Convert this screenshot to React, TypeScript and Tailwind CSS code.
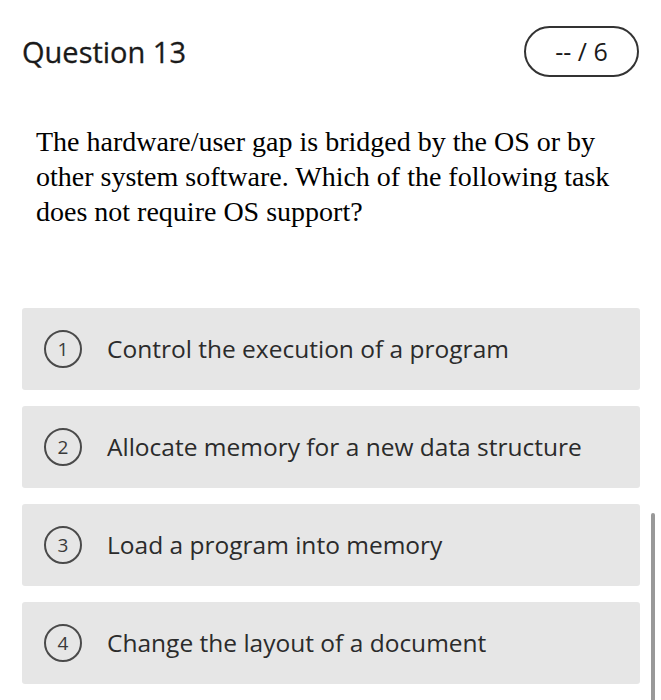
import React from 'react'

const options = [
  'Control the execution of a program',
  'Allocate memory for a new data structure',
  'Load a program into memory',
  'Change the layout of a document',
]

export default function App() {
  return (
    <div className="relative w-[661px] h-[700px] overflow-hidden bg-white font-['Open_Sans',sans-serif] text-[#222]">
      {/* header */}
      <div className="flex items-center justify-between pl-[22px] pr-[22px] pt-[26px]">
        <h1 className="text-[29px] leading-[51px] text-[#1a1a1a] [-webkit-text-stroke:0.3px_#1a1a1a]">Question 13</h1>
        <div className="flex items-center justify-center w-[115px] h-[51px] rounded-full border-2 border-[#333] text-[25px] text-[#1a1a1a]">
          -- / 6
        </div>
      </div>

      {/* question */}
      <p className="mt-[47px] px-[36px] font-['Liberation_Serif',serif] text-[28px] leading-[35px] text-black">
        The hardware/user gap is bridged by the OS or by other system software. Which of the following task does not require OS support?
      </p>

      {/* options */}
      <div className="mt-[79px] flex flex-col gap-[16px] pl-[22px] pr-[21px]">
        {options.map((o, i) => (
          <div key={i} className="flex items-center h-[82px] rounded-[3px] bg-[#e6e6e6] pl-[22px]">
            <span className="flex items-center justify-center w-[38px] h-[38px] shrink-0 rounded-full border-2 border-[#4a4a4a] text-[19px] text-[#3a3a3a]">
              {i + 1}
            </span>
            <span className="ml-[25px] text-[24.5px] text-[#2b2b2b]">{o}</span>
          </div>
        ))}
      </div>

      {/* scroll indicator */}
      <div className="absolute left-[651px] top-[513px] w-[4px] h-[200px] rounded-full bg-[#999]" />
    </div>
  )
}
